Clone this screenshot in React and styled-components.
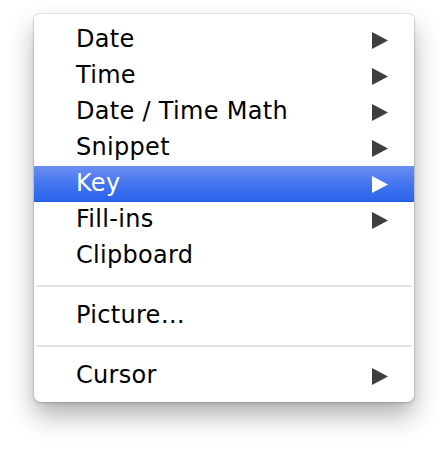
import React from 'react'
import styled, { createGlobalStyle } from 'styled-components'

const GlobalStyle = createGlobalStyle`
    html, body {
        margin: 0;
        padding: 0;
        background: #ffffff;
    }
`

const items = [
    { label: 'Date', sub: true },
    { label: 'Time', sub: true },
    { label: 'Date / Time Math', sub: true },
    { label: 'Snippet', sub: true },
    { label: 'Key', sub: true, active: true },
    { label: 'Fill-ins', sub: true },
    { label: 'Clipboard' },
    { sep: true },
    { label: 'Picture…' },
    { sep: true },
    { label: 'Cursor', sub: true },
]

function Arrow({ active }) {
    return (
        <ArrowIcon width="16" height="17" viewBox="0 0 16 17">
            <path d="M0 0 L16 8.5 L0 17 Z" fill={active ? '#ffffff' : '#3f3f3f'} />
        </ArrowIcon>
    )
}

function App() {
    return (
        <Page>
            <GlobalStyle />
            <Menu>
                {items.map((item, index) =>
                    item.sep ? (
                        <Separator key={index} />
                    ) : (
                        <Row key={index} active={item.active}>
                            <Label>{item.label}</Label>
                            {item.sub && <Arrow active={item.active} />}
                        </Row>
                    )
                )}
            </Menu>
        </Page>
    )
}

export default App

const Page = styled.div`
    width: 448px;
    height: 456px;
    padding: 14px 0 0 34px;
    box-sizing: border-box;
    background: #ffffff;
`

const Menu = styled.div`
    width: 380px;
    padding: 8px 0;
    box-sizing: border-box;
    background: #ffffff;
    border-radius: 5px 5px 7px 7px;
    box-shadow: 0 0 0 1px rgba(0, 0, 0, 0.08), 0 14px 26px rgba(0, 0, 0, 0.3), 0 2px 4px rgba(0, 0, 0, 0.12);
    font-family: "DejaVu Sans", "Verdana", sans-serif;
`

const Row = styled.div`
    height: 36px;
    display: flex;
    align-items: center;
    padding: 0 26px 0 42px;
    color: ${props => props.active ? '#ffffff' : '#000000'};
    background: ${props => props.active ? 'linear-gradient(to bottom, #6a8ff2 0%, #4475ee 50%, #2a63ea 96%, #1b55e2 100%)' : 'transparent'};
`

const Label = styled.span`
    flex: 1;
    font-size: 24px;
    letter-spacing: 0.3px;
    line-height: 1;
    margin-top: -2px;
`

const ArrowIcon = styled.svg`
    display: block;
`

const Separator = styled.div`
    height: 24px;
    display: flex;
    align-items: center;
    padding: 0 2px;

    &::after {
        content: '';
        flex: 1;
        height: 2px;
        background: #e2e2e2;
    }
`
